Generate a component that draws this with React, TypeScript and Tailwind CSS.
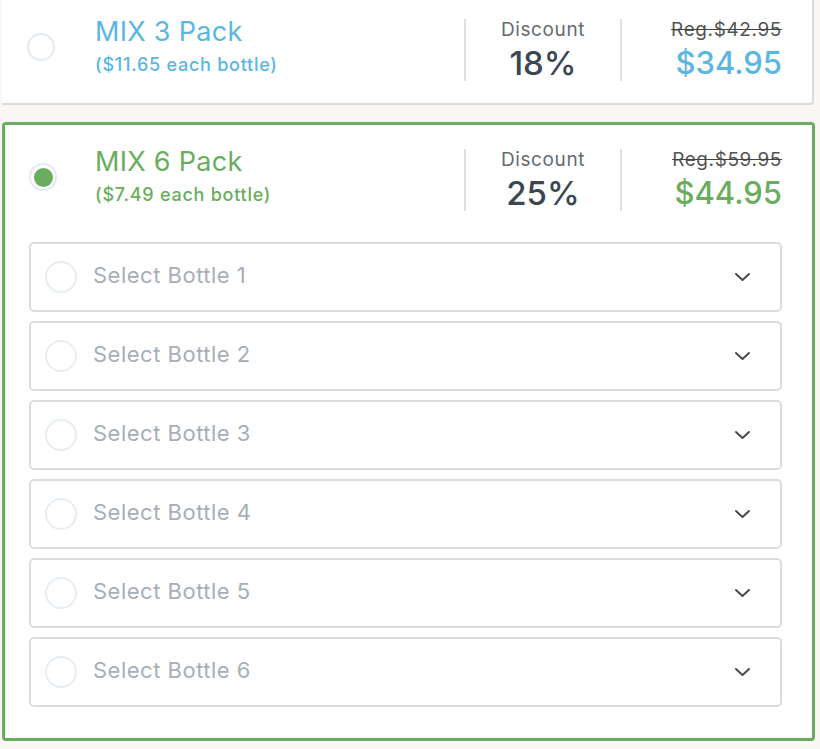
import React from "react";

const font = { fontFamily: "Inter, 'Noto Sans', sans-serif" };

function Chevron() {
  return (
    <svg width="17" height="10" viewBox="0 0 17 10" fill="none">
      <path d="M2 2l6.5 6 6.5-6" stroke="#4a4a4a" strokeWidth="2" strokeLinecap="round" strokeLinejoin="round" />
    </svg>
  );
}

function Header({
  title,
  sub,
  discount,
  reg,
  price,
  color,
  selected,
  textGap,
}: {
  title: string;
  sub: string;
  discount: string;
  reg: string;
  price: string;
  color: string;
  selected: boolean;
  textGap: string;
}) {
  return (
    <div className="flex items-center h-[62px]">
      <div className="w-[28px] h-[28px] -mt-[6px] rounded-full border-2 border-[#e3eaf0] flex items-center justify-center bg-white">
        {selected && <div className="w-[19px] h-[19px] rounded-full bg-[#6aad5e]" />}
      </div>
      <div className={`flex-1 self-start -mt-[2px] ${textGap}`}>
        <div className={`text-[27px] leading-[30px] tracking-[0.3px] ${color}`}>{title}</div>
        <div className={`text-[18px] leading-[22px] font-medium tracking-[0.75px] mt-[7px] ${color}`}>{sub}</div>
      </div>
      <div className="w-[2px] h-[62px] bg-[#e0e0e0]" />
      <div className="w-[154px] h-[62px] flex flex-col items-center">
        <div className="text-[19px] leading-[22px] tracking-[0.6px] text-[#666b70]">Discount</div>
        <div className="text-[33px] leading-[36px] font-medium text-[#3c4651] mt-[4px]">{discount}</div>
      </div>
      <div className="w-[2px] h-[62px] bg-[#e0e0e0]" />
      <div className="w-[160px] h-[62px] flex flex-col items-end">
        <div className="text-[19px] leading-[22px] tracking-[0.6px] text-[#555] line-through decoration-[#444]">{reg}</div>
        <div className={`text-[31px] leading-[36px] font-medium mt-[4px] ${color}`}>{price}</div>
      </div>
    </div>
  );
}

export default function App() {
  return (
    <div className="w-[820px] h-[749px] bg-[#f8f7f3] pl-[2px] overflow-hidden" style={font}>
      <div className="w-[812px] bg-white border-r-2 border-b-2 border-[#dadada] rounded-br-[4px] pl-[25px] pr-[30px] pt-[19px] pb-[22px]">
        <Header
          title="MIX 3 Pack"
          sub="($11.65 each bottle)"
          discount="18%"
          reg="Reg.$42.95"
          price="$34.95"
          color="text-[#5ab6e2]"
          selected={false}
          textGap="ml-[40px]"
        />
      </div>
      <div className="mt-[17px] w-[813px] bg-white border-[3px] border-[#6aad5e] rounded-[4px] pl-[24px] pr-[30px] pt-[24px] pb-[31px]">
        <Header
          title="MIX 6 Pack"
          sub="($7.49 each bottle)"
          discount="25%"
          reg="Reg.$59.95"
          price="$44.95"
          color="text-[#6aad5e]"
          selected={true}
          textGap="ml-[38px]"
        />
        <div className="mt-[31px] flex flex-col gap-[9px]">
          {[1, 2, 3, 4, 5, 6].map((n) => (
            <div
              key={n}
              className="h-[70px] border-2 border-[#dcdcdc] rounded-[5px] flex items-center pl-[14px] pr-[29px]"
            >
              <div className="w-[32px] h-[32px] rounded-full border-2 border-[#e6eef3]" />
              <div className="flex-1 ml-[16px] text-[22px] tracking-[0.5px] text-[#a8aeb5] -mt-[3px]">
                Select Bottle {n}
              </div>
              <Chevron />
            </div>
          ))}
        </div>
      </div>
    </div>
  );
}
